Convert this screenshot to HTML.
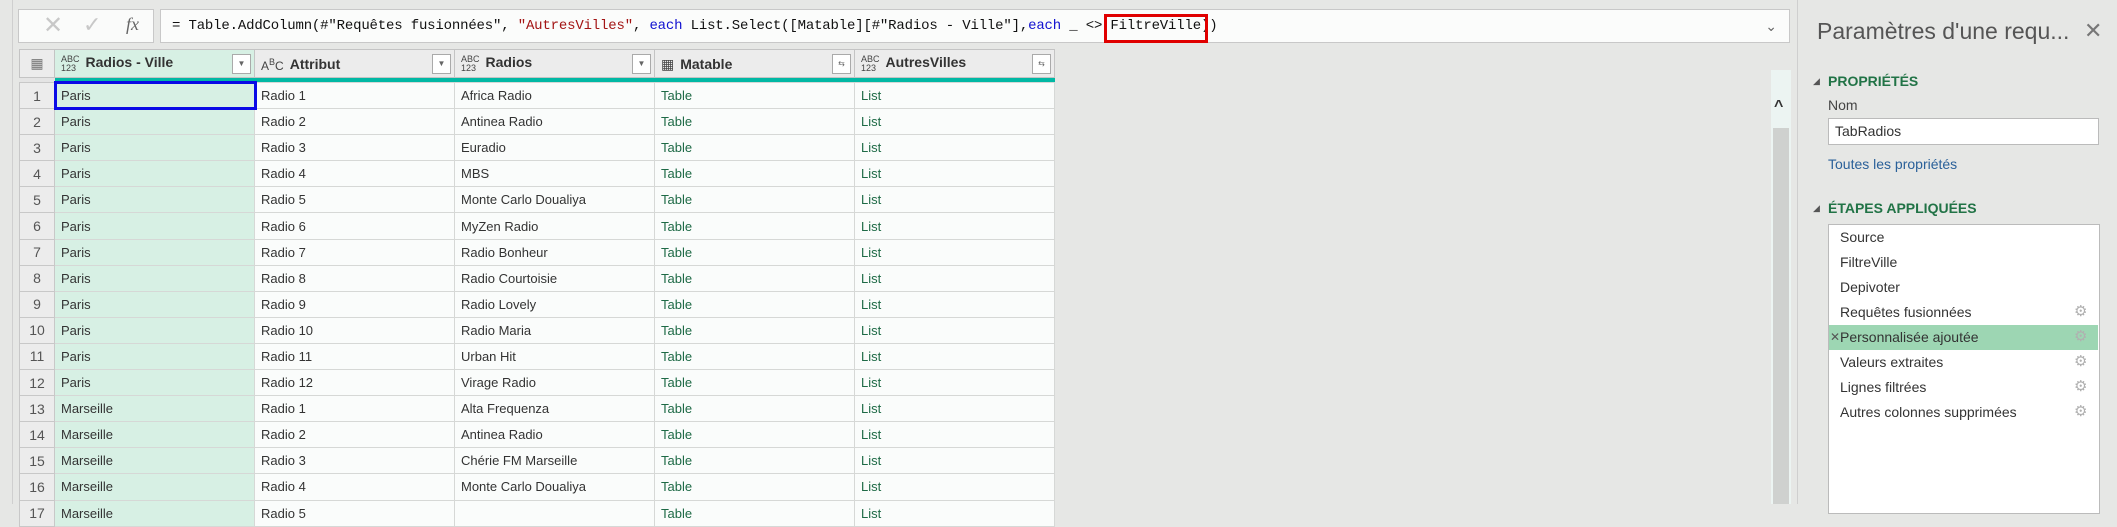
<!DOCTYPE html>
<html><head><meta charset="utf-8">
<style>
*{box-sizing:border-box;margin:0;padding:0}
body{width:2117px;height:504px;overflow:hidden;background:#e6e7e5;font-family:"Liberation Sans",sans-serif;position:relative;color:#333}
.a{position:absolute}
.lb{left:18px;top:9px;width:136px;height:34px;background:#fafbfa;border:1px solid #c8c8c8}
.fb{left:160px;top:9px;width:1630px;height:34px;background:#fbfcfb;border:1px solid #c8c8c8;font-family:"Liberation Mono",monospace;font-size:14px;letter-spacing:-0.17px;line-height:32px;padding-left:11px;white-space:pre;color:#111}
.kw{color:#1010d0}.st{color:#a31515}
.red{left:1104px;top:14px;width:104px;height:29px;border:3px solid #e00000}
table{position:absolute;left:19px;top:49px;border-collapse:collapse;font-size:13px}
td,th{height:26.1px;border:1px solid #d6d8d6;padding:0 0 0 6px;text-align:left;white-space:nowrap;overflow:hidden}
th{height:28px;background:#ececec;font-weight:bold;font-size:14px;color:#333;border-color:#c4c4c4;position:relative}
tr.bar td{height:5px;background:#01b8a4;padding:0;border:none}
tr.bar td.rn{background:#e4e4e4}
td.rn{width:35px;background:#ececec;text-align:center;padding:0;font-size:14px;color:#555;border-color:#c8c8c8}
td{background:#fafcfb;width:200px}
td.c1{background:#d7f0e4}
td.g{color:#1e6a46}
.dd{position:absolute;right:3px;top:4px;width:19px;height:20px;border:1px solid #aaa;background:#fff;font-size:8px;color:#666;text-align:center;line-height:18px;font-weight:normal}
.ti{font-size:9px;font-weight:normal;line-height:9px;display:inline-block;vertical-align:middle;margin-right:6px;color:#444}
.sel{left:54px;top:81px;width:203px;height:29px;border:3px solid #0a0ae6}
.sb{left:1771px;top:70px;width:20px;height:434px;background:#ecf4f2}
.th{left:1773px;top:128px;width:16px;height:376px;background:#cfd1cf}
.rp{left:1797px;top:0;width:1px;height:504px;background:#cfcfcf}
.h{color:#217346;font-weight:bold;font-size:14px}
.st2{font-size:14px;color:#333;left:1840px}
.gear{left:2074px;color:#b0b0b0;font-size:15px;font-family:"DejaVu Sans",sans-serif}
</style></head><body>
<div class="a" style="left:12px;top:0;width:1px;height:504px;background:#cfcfcf"></div>
<div class="a lb"><span class="a" style="left:24px;top:1px;font-size:24px;color:#c8c8c8">✕</span><span class="a" style="left:64px;top:2px;font-size:22px;color:#c8c8c8">✓</span><span class="a" style="left:107px;top:4px;font-size:18px;font-style:italic;font-family:'Liberation Serif',serif;color:#666">fx</span></div>
<div class="a fb">= Table.AddColumn(#"Requêtes fusionnées", <span class="st">"AutresVilles"</span>, <span class="kw">each</span> List.Select([Matable][#"Radios - Ville"],<span class="kw">each</span> _ &lt;&gt; FiltreVille))<span class="a" style="right:12px;top:0;font-family:'Liberation Sans';font-size:14px;color:#666;letter-spacing:0">⌄</span></div>
<div class="a red"></div>
<table>
<tr><th style="width:35px;padding:0;text-align:center;font-weight:normal;color:#777">▦</th>
<th style="width:200px;background:#d7f0e4"><span class="ti">ABC<br>123</span>Radios - Ville<span class="dd">▼</span></th>
<th style="width:200px"><span class="ti" style="font-size:12px">A<sup style="font-size:9px">B</sup>C</span>Attribut<span class="dd">▼</span></th>
<th style="width:200px"><span class="ti">ABC<br>123</span>Radios<span class="dd">▼</span></th>
<th style="width:199px"><span class="ti" style="font-size:14px">▦</span>Matable<span class="dd">⇆</span></th>
<th style="width:199px"><span class="ti">ABC<br>123</span>AutresVilles<span class="dd">⇆</span></th></tr>
<tr class="bar"><td class="rn"></td><td></td><td></td><td></td><td></td><td></td></tr>
<tr><td class="rn">1</td><td class="c1">Paris</td><td>Radio 1</td><td>Africa Radio</td><td class="g">Table</td><td class="g">List</td></tr>
<tr><td class="rn">2</td><td class="c1">Paris</td><td>Radio 2</td><td>Antinea Radio</td><td class="g">Table</td><td class="g">List</td></tr>
<tr><td class="rn">3</td><td class="c1">Paris</td><td>Radio 3</td><td>Euradio</td><td class="g">Table</td><td class="g">List</td></tr>
<tr><td class="rn">4</td><td class="c1">Paris</td><td>Radio 4</td><td>MBS</td><td class="g">Table</td><td class="g">List</td></tr>
<tr><td class="rn">5</td><td class="c1">Paris</td><td>Radio 5</td><td>Monte Carlo Doualiya</td><td class="g">Table</td><td class="g">List</td></tr>
<tr><td class="rn">6</td><td class="c1">Paris</td><td>Radio 6</td><td>MyZen Radio</td><td class="g">Table</td><td class="g">List</td></tr>
<tr><td class="rn">7</td><td class="c1">Paris</td><td>Radio 7</td><td>Radio Bonheur</td><td class="g">Table</td><td class="g">List</td></tr>
<tr><td class="rn">8</td><td class="c1">Paris</td><td>Radio 8</td><td>Radio Courtoisie</td><td class="g">Table</td><td class="g">List</td></tr>
<tr><td class="rn">9</td><td class="c1">Paris</td><td>Radio 9</td><td>Radio Lovely</td><td class="g">Table</td><td class="g">List</td></tr>
<tr><td class="rn">10</td><td class="c1">Paris</td><td>Radio 10</td><td>Radio Maria</td><td class="g">Table</td><td class="g">List</td></tr>
<tr><td class="rn">11</td><td class="c1">Paris</td><td>Radio 11</td><td>Urban Hit</td><td class="g">Table</td><td class="g">List</td></tr>
<tr><td class="rn">12</td><td class="c1">Paris</td><td>Radio 12</td><td>Virage Radio</td><td class="g">Table</td><td class="g">List</td></tr>
<tr><td class="rn">13</td><td class="c1">Marseille</td><td>Radio 1</td><td>Alta Frequenza</td><td class="g">Table</td><td class="g">List</td></tr>
<tr><td class="rn">14</td><td class="c1">Marseille</td><td>Radio 2</td><td>Antinea Radio</td><td class="g">Table</td><td class="g">List</td></tr>
<tr><td class="rn">15</td><td class="c1">Marseille</td><td>Radio 3</td><td>Chérie FM Marseille</td><td class="g">Table</td><td class="g">List</td></tr>
<tr><td class="rn">16</td><td class="c1">Marseille</td><td>Radio 4</td><td>Monte Carlo Doualiya</td><td class="g">Table</td><td class="g">List</td></tr>
<tr><td class="rn">17</td><td class="c1">Marseille</td><td>Radio 5</td><td></td><td class="g">Table</td><td class="g">List</td></tr>
</table>
<div class="a sel"></div>
<div class="a sb"></div>
<div class="a th"></div>
<div class="a" style="left:1774px;top:98px;font-size:16px;color:#333;font-weight:bold">^</div>
<div class="a rp"></div>
<div class="a" style="left:1817px;top:18px;font-size:23px;color:#555">Paramètres d'une requ...</div>
<div class="a" style="left:2084px;top:18px;font-size:22px;color:#777">✕</div>
<div class="a" style="left:1813px;top:76px;font-size:9px;color:#555">◢</div>
<div class="a h" style="left:1828px;top:73px">PROPRIÉTÉS</div>
<div class="a" style="left:1828px;top:97px;font-size:14px;color:#444">Nom</div>
<div class="a" style="left:1828px;top:118px;width:271px;height:27px;background:#fff;border:1px solid #bbb;font-size:14px;line-height:25px;padding-left:6px">TabRadios</div>
<div class="a" style="left:1828px;top:156px;font-size:14px;color:#2a6099">Toutes les propriétés</div>
<div class="a" style="left:1813px;top:203px;font-size:9px;color:#555">◢</div>
<div class="a h" style="left:1828px;top:200px">ÉTAPES APPLIQUÉES</div>
<div class="a" style="left:1828px;top:224px;width:272px;height:290px;background:#fff;border:1px solid #bbb"></div>
<div class="a" style="left:1829px;top:325px;width:269px;height:25px;background:#9dd6b3"></div>
<div class="a" style="left:1830px;top:330px;font-size:12px;color:#555">✕</div>
<div class="a st2" style="top:229px">Source</div>
<div class="a st2" style="top:254px">FiltreVille</div>
<div class="a st2" style="top:279px">Depivoter</div>
<div class="a st2" style="top:304px">Requêtes fusionnées</div>
<div class="a st2" style="top:329px">Personnalisée ajoutée</div>
<div class="a st2" style="top:354px">Valeurs extraites</div>
<div class="a st2" style="top:379px">Lignes filtrées</div>
<div class="a st2" style="top:404px">Autres colonnes supprimées</div>
<div class="a gear" style="top:302px">⚙</div>
<div class="a gear" style="top:327px">⚙</div>
<div class="a gear" style="top:352px">⚙</div>
<div class="a gear" style="top:377px">⚙</div>
<div class="a gear" style="top:402px">⚙</div>
</body></html>
